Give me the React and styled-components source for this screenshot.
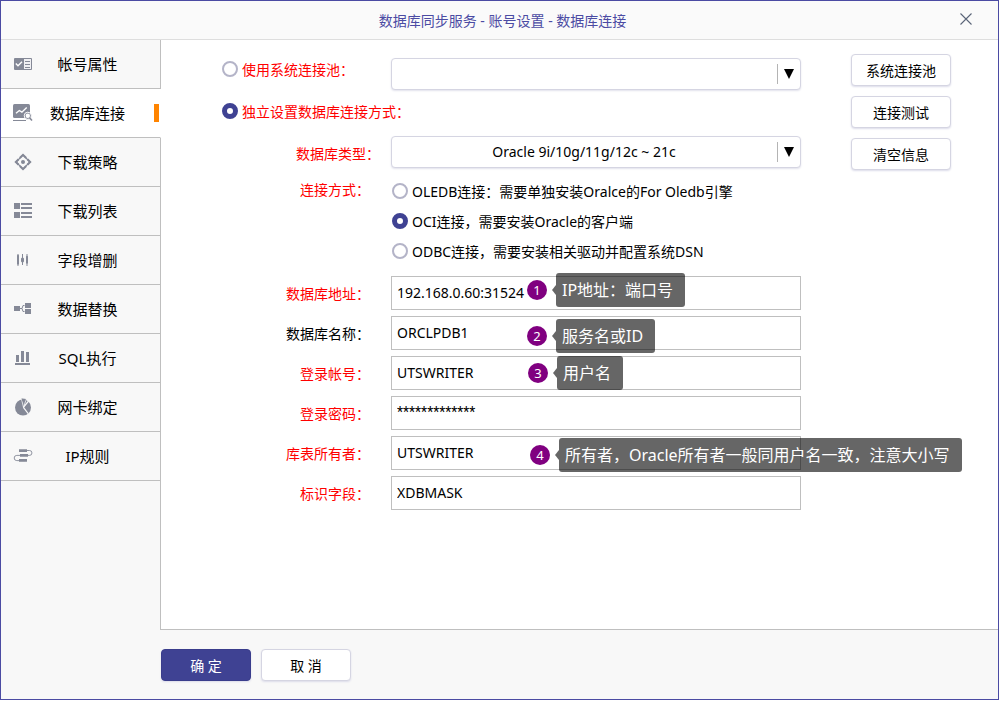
import { useState } from "react";
import styled, { createGlobalStyle } from "styled-components";

const GlobalStyle = createGlobalStyle`
  * {
    box-sizing: border-box;
  }

  body {
    margin: 0;
    background: #fff;
  }

  body,
  button,
  input,
  select {
    font-family: "Noto Sans", "Noto Sans CJK SC", sans-serif;
    font-size: 14px;
    line-height: 20px;
    color: #000;
  }
`;

const Window = styled.div`
  display: flex;
  flex-direction: column;
  min-height: calc(100vh - 1px);
  border: 1px solid #4b4ba3;
  background: #f8f8f8;
`;

const Header = styled.header`
  display: flex;
  align-items: center;
  height: 39px;
  padding: 0 20px 0 50px;
  border-bottom: 1px solid #dedede;
  background: #fafafa;
`;

const Title = styled.h1`
  flex: 1;
  margin: 0;
  padding-top: 2px;
  font-size: 14px;
  font-weight: 400;
  text-align: center;
  color: #4b4ba3;
`;

const CloseButton = styled.button`
  display: flex;
  align-items: center;
  justify-content: center;
  width: 24px;
  height: 24px;
  margin-bottom: 2px;
  padding: 0;
  border: none;
  background: transparent;
  cursor: pointer;
`;

const Body = styled.div`
  display: flex;
  flex: 1;
`;

const Sidebar = styled.nav`
  display: flex;
  flex-direction: column;
  width: 160px;
`;

const SidebarRest = styled.div`
  flex: 1;
  border-right: 1px solid #bfbfbf;
`;

const MenuItem = styled.button`
  display: grid;
  grid-template-columns: 44px 1fr 30px;
  align-items: center;
  height: 49px;
  padding: 0;
  border: none;
  border-bottom: 1px solid #bfbfbf;
  border-right: 1px solid ${(props) => (props.$active ? "#fff" : "#bfbfbf")};
  background: ${(props) => (props.$active ? "#fff" : "#f8f8f8")};
  font-size: 15px;
  text-align: center;
  cursor: pointer;

  svg {
    justify-self: center;
  }
`;

const MenuText = styled.span`
  white-space: nowrap;
`;

const ActiveMark = styled.span`
  justify-self: end;
  width: 5px;
  height: 18px;
  margin-right: 1px;
  background: #ff8400;
`;

const Panel = styled.main`
  display: flex;
  flex: 1;
  gap: 50px;
  padding: 14px 47px 14px 61px;
  border-bottom: 1px solid #bfbfbf;
  background: #fff;
`;

const Form = styled.form`
  flex: 1;
  padding-top: 4px;
`;

const Row = styled.div`
  display: grid;
  grid-template-columns: 169px 1fr;
  margin-bottom: ${(props) => props.$gap || 0}px;
`;

const Label = styled.label`
  padding: ${(props) => (props.$tall ? 8 : 0)}px ${(props) => props.$end || 21}px 0 0;
  text-align: right;
  white-space: nowrap;
  color: ${(props) => (props.$plain ? "#000" : "#f00")};
`;

const RadioLabel = styled.label`
  display: flex;
  align-items: center;
  gap: 4px;
  height: 22px;
  white-space: nowrap;
  color: ${(props) => (props.$required ? "#f00" : "#000")};
`;

const RadioText = styled.span`
  padding-top: 2px;
`;

const Radio = styled.input`
  appearance: none;
  flex-shrink: 0;
  width: 16px;
  height: 16px;
  margin: 0;
  border: 2px solid #b4b4c8;
  border-radius: 50%;
  background: #fff;

  &:checked {
    border: 5px solid #3f4293;
  }
`;

const RadioList = styled.div`
  display: flex;
  flex-direction: column;
  gap: 8px;
  padding-left: 1px;
`;

const SelectBox = styled.div`
  position: relative;
  height: 32px;
`;

const Select = styled.select`
  appearance: none;
  width: 100%;
  height: 32px;
  padding: 0 24px 0 0;
  border: 1px solid #d5d5e2;
  border-radius: 4px;
  background: #fff;
  box-shadow: 0 1px 2px #e2e2ec;
  text-align: center;
  text-align-last: center;
`;

const Arrow = styled.span`
  position: absolute;
  top: 6px;
  right: 1px;
  display: flex;
  align-items: center;
  justify-content: center;
  width: 23px;
  height: 20px;
  padding-right: 1px;
  border-left: 1px solid #b4b4b4;
  pointer-events: none;
`;

const Fields = styled.div`
  display: flex;
  flex-direction: column;
  gap: 6px;
`;

const FieldBox = styled.div`
  position: relative;
`;

const Input = styled.input`
  display: block;
  width: 100%;
  height: 34px;
  padding: 0 5px 2px;
  border: 1px solid #bfbfbf;
  border-radius: 0;
  background: #fff;
  ${(props) => props.$masked && "font-family: Roboto, sans-serif;"}
`;

const Note = styled.div`
  position: absolute;
  top: ${(props) => props.$top}px;
  left: ${(props) => props.$left}px;
  display: flex;
  align-items: center;
  gap: 5px;
`;

const Badge = styled.span`
  width: 20px;
  height: 20px;
  border-radius: 50%;
  background: #800080;
  color: #fff;
  font-size: 13px;
  text-align: center;
`;

const Bubble = styled.span`
  display: flex;
  align-items: center;

  &::before {
    content: "";
    border: 5px solid transparent;
    border-left: none;
    border-right: 4px solid rgba(0, 0, 0, 0.6);
  }
`;

const BubbleText = styled.span`
  padding: 5px 12px 5px 6px;
  border-radius: 3px;
  background: rgba(0, 0, 0, 0.6);
  color: #fff;
  font-size: 16px;
  line-height: 24px;
  white-space: nowrap;
`;

const Actions = styled.div`
  display: flex;
  flex-direction: column;
  gap: 10px;
  width: 100px;
`;

const Button = styled.button`
  height: 32px;
  min-width: 90px;
  padding: 2px 8px 0;
  border: 1px solid ${(props) => (props.$primary ? "#3a3d8c" : "#d5d5e2")};
  border-radius: 4px;
  background: ${(props) => (props.$primary ? "#3f4293" : "#fff")};
  box-shadow: 0 1px 2px #dcdcea;
  color: ${(props) => (props.$primary ? "#fff" : "#000")};
  cursor: pointer;
`;

const Footer = styled.footer`
  display: flex;
  gap: 10px;
  padding: 19px 0 18px 160px;
`;

const gray = "#858997";

const icons = {
  card: (
    <>
      <rect x="2" y="5" width="18" height="12" rx="1" fill={gray} />
      <path d="M3.8 10.6l2.2 2.2 4-4" fill="none" stroke="#fff" strokeWidth="1.4" />
      <rect x="12" y="6" width="7" height="10" fill="#f0f0f3" />
      <path d="M13 8.5h5M13 11.5h5M13 14.5h5" stroke={gray} />
    </>
  ),
  database: (
    <>
      <rect x="1" y="2" width="17" height="14" rx="1.5" fill={gray} />
      <path d="M4 11.3l3.3-2.8 2.6 1.7 4.8-4.6" fill="none" stroke="#fff" strokeWidth="1.4" />
      <path d="M1 18.5h13" stroke={gray} />
      <circle cx="15.8" cy="13.8" r="3.6" fill={gray} stroke="#fff" />
      <circle cx="15.8" cy="13.8" r="2.2" fill="#fff" />
      <path d="M17.6 15.8l2.4 2.7" stroke={gray} strokeWidth="1.6" />
    </>
  ),
  strategy: (
    <>
      <path
        d="M7.8 7L11 3.8 14.2 7M15.4 8.2l2.8 2.8-2.8 2.8M14.2 15L11 18.2 7.8 15M6.6 13.8L3.8 11l2.8-2.8"
        fill="none"
        stroke={gray}
        strokeWidth="2"
      />
      <path d="M11 4l7 7-7 7-7-7z" fill="none" stroke={gray} strokeWidth="1.2" />
      <circle cx="11" cy="11" r="2" fill={gray} />
    </>
  ),
  list: (
    <path
      d="M2 3h6v6H2zM2 12h6v6H2zM9 3h11v2H9zM9 7h11v2H9zM9 12h11v2H9zM9 16h11v2H9z"
      fill={gray}
    />
  ),
  fields: (
    <>
      <path d="M6 5v12M10.5 5v11M15 5v12" stroke={gray} />
      <path
        d="M5 6.5L6 5.5l1 1V15l-1 1-1-1zM9 9.5L10.5 8 12 9.5v3L10.5 14 9 12.5zM14 7.5l1-1 1 1V14l-1 1-1-1z"
        fill={gray}
      />
    </>
  ),
  replace: (
    <>
      <path d="M2 8h6v5H2zM13 5h6v5h-6zM13 11h6v5h-6z" fill={gray} />
      <path d="M8 10.5h2M12.5 7.5h-1.5l-1 3 1 3h1.5" fill="none" stroke={gray} />
    </>
  ),
  chart: <path d="M4 8h3v7H4zM9 4h3v11H9zM14 5h3v10h-3zM3 16h15v2H3z" fill={gray} />,
  pie: (
    <>
      <circle cx="11" cy="11.5" r="8" fill={gray} />
      <path d="M9.3 2.2l2.2 9.2 2.8-8.4z" fill={gray} stroke="#f8f8f8" strokeWidth="0.8" />
      <path d="M9.6 2.4l4 .6-.6 2.4-2.8-.2z" fill={gray} />
      <path d="M11.4 11.4L16.6 5M11.4 11.4l5 6.4" stroke="#f8f8f8" strokeWidth="1.2" />
    </>
  ),
  rules: (
    <>
      <path
        d="M7 5.5h10.5a2.4 2.4 0 0 1 0 4.9H4.8a2.6 2.6 0 0 0 0 5.2H13"
        fill="none"
        stroke={gray}
        strokeWidth="0.9"
      />
      <path d="M7 4.3h8v2.8H7zM8 9h8v2.8H8zM7 14h8v2.8H7z" fill={gray} />
    </>
  ),
};

const menu = [
  { text: "帐号属性", icon: "card" },
  { text: "数据库连接", icon: "database" },
  { text: "下载策略", icon: "strategy" },
  { text: "下载列表", icon: "list" },
  { text: "字段增删", icon: "fields" },
  { text: "数据替换", icon: "replace" },
  { text: "SQL执行", icon: "chart" },
  { text: "网卡绑定", icon: "pie" },
  { text: "IP规则", icon: "rules" },
];

const methods = [
  { id: "oledb", text: "OLEDB连接：需要单独安装Oralce的For Oledb引擎" },
  { id: "oci", text: "OCI连接，需要安装Oracle的客户端" },
  { id: "odbc", text: "ODBC连接，需要安装相关驱动并配置系统DSN" },
];

const fields = [
  {
    id: "address",
    label: "数据库地址：",
    value: "192.168.0.60:31524",
    note: { text: "IP地址：端口号", top: -3, left: 136 },
  },
  {
    id: "dbname",
    label: "数据库名称：",
    value: "ORCLPDB1",
    plain: true,
    note: { text: "服务名或ID", top: 3, left: 136 },
  },
  {
    id: "account",
    label: "登录帐号：",
    value: "UTSWRITER",
    note: { text: "用户名", top: 0, left: 137 },
  },
  { id: "password", label: "登录密码：", value: "*************", masked: true },
  {
    id: "owner",
    label: "库表所有者：",
    value: "UTSWRITER",
    note: { text: "所有者，Oracle所有者一般同用户名一致，注意大小写", top: 2, left: 139 },
  },
  { id: "mask", label: "标识字段：", value: "XDBMASK" },
];

const notes = fields.filter((f) => f.note).map((f) => f.id);

function DropDown({ children, ...rest }) {
  return (
    <SelectBox>
      <Select {...rest}>{children}</Select>
      <Arrow>
        <svg width="10" height="10" viewBox="0 0 10 10">
          <path d="M0 0h10L5 10z" fill="#000" />
        </svg>
      </Arrow>
    </SelectBox>
  );
}

function App() {
  const [active, setActive] = useState("database");
  const [source, setSource] = useState("own");
  const [method, setMethod] = useState("oci");
  const [values, setValues] = useState(
    Object.fromEntries(fields.map((f) => [f.id, f.value]))
  );

  const handleChange = (e) => {
    setValues({ ...values, [e.target.name]: e.target.value });
  };

  return (
    <>
      <GlobalStyle />
      <Window>
        <Header>
          <Title>数据库同步服务 - 账号设置 - 数据库连接</Title>
          <CloseButton type="button" aria-label="关闭">
            <svg width="12" height="12" viewBox="0 0 12 12">
              <path d="M0.5 0.5l11 11M11.5 0.5l-11 11" stroke="#5a6478" strokeWidth="1.1" />
            </svg>
          </CloseButton>
        </Header>
        <Body>
          <Sidebar>
            {menu.map((item) => (
              <MenuItem
                key={item.icon}
                type="button"
                $active={active === item.icon}
                onClick={() => setActive(item.icon)}
              >
                <svg width="22" height="22" viewBox="0 0 22 22">
                  {icons[item.icon]}
                </svg>
                <MenuText>{item.text}</MenuText>
                {active === item.icon && <ActiveMark />}
              </MenuItem>
            ))}
            <SidebarRest />
          </Sidebar>
          <Panel>
            <Form id="connection" onSubmit={(e) => e.preventDefault()}>
              <Row $gap={10}>
                <RadioLabel $required>
                  <Radio
                    type="radio"
                    name="source"
                    checked={source === "pool"}
                    onChange={() => setSource("pool")}
                  />
                  <RadioText>使用系统连接池：</RadioText>
                </RadioLabel>
                <DropDown aria-label="系统连接池" />
              </Row>
              <Row $gap={14}>
                <RadioLabel $required>
                  <Radio
                    type="radio"
                    name="source"
                    checked={source === "own"}
                    onChange={() => setSource("own")}
                  />
                  <RadioText>独立设置数据库连接方式：</RadioText>
                </RadioLabel>
              </Row>
              <Row $gap={12}>
                <Label htmlFor="dbtype" $tall $end={11}>
                  数据库类型：
                </Label>
                <DropDown id="dbtype">
                  <option>Oracle 9i/10g/11g/12c ~ 21c</option>
                </DropDown>
              </Row>
              <Row $gap={14} role="radiogroup" aria-labelledby="method">
                <Label as="span" id="method">
                  连接方式：
                </Label>
                <RadioList>
                  {methods.map((m) => (
                    <RadioLabel key={m.id}>
                      <Radio
                        type="radio"
                        name="method"
                        checked={method === m.id}
                        onChange={() => setMethod(m.id)}
                      />
                      <RadioText>{m.text}</RadioText>
                    </RadioLabel>
                  ))}
                </RadioList>
              </Row>
              <Fields>
                {fields.map((f) => (
                  <Row key={f.id}>
                    <Label htmlFor={f.id} $tall $plain={f.plain}>
                      {f.label}
                    </Label>
                    <FieldBox>
                      <Input
                        type="text"
                        id={f.id}
                        name={f.id}
                        value={values[f.id]}
                        onChange={handleChange}
                        $masked={f.masked}
                      />
                      {f.note && (
                        <Note $top={f.note.top} $left={f.note.left}>
                          <Badge>{notes.indexOf(f.id) + 1}</Badge>
                          <Bubble>
                            <BubbleText>{f.note.text}</BubbleText>
                          </Bubble>
                        </Note>
                      )}
                    </FieldBox>
                  </Row>
                ))}
              </Fields>
            </Form>
            <Actions>
              <Button type="button">系统连接池</Button>
              <Button type="button">连接测试</Button>
              <Button type="button">清空信息</Button>
            </Actions>
          </Panel>
        </Body>
        <Footer>
          <Button type="submit" form="connection" $primary>
            确 定
          </Button>
          <Button type="button">取 消</Button>
        </Footer>
      </Window>
    </>
  );
}

export default App;
